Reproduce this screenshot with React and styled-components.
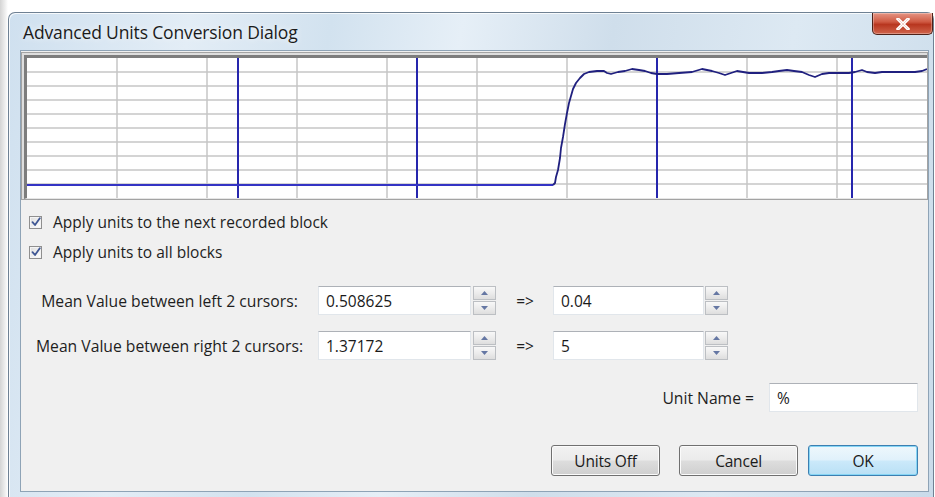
import React from "react";
import styled, { createGlobalStyle } from "styled-components";

const Global = createGlobalStyle`
  html, body { margin: 0; padding: 0; background: #ffffff; overflow: hidden; }
  body { font-family: "Open Sans", "Liberation Sans", sans-serif; }
  #root { width: 935px; height: 497px; position: relative; overflow: hidden; }
`;

const Desktop = styled.div`
  width: 935px;
  height: 497px;
  padding: 12px 0 0 8px;
  box-sizing: border-box;
  background: linear-gradient(90deg, #d4d4d4 0px, #eeeeee 5px, #ffffff 8px);
`;

const Window = styled.div`
  width: 926px;
  height: 500px;
  box-sizing: border-box;
  border: 1px solid #6f8193;
  border-bottom: none;
  border-radius: 7px 7px 0 0;
  background: linear-gradient(
    100deg,
    #cfe0ef 0%,
    #e3edf6 18%,
    #d2e2ef 32%,
    #e6eff7 45%,
    #cfdeeb 60%,
    #dde9f3 78%,
    #c9dbea 100%
  );
  box-shadow: inset 1px 1px 0 rgba(255, 255, 255, 0.8);
  padding: 0 0 0 11px;
  display: flex;
  flex-direction: column;
`;

const TitleBar = styled.div`
  height: 37px;
  display: flex;
  justify-content: space-between;
  align-items: flex-start;
`;

const Title = styled.div`
  font-family: "Open Sans", "Liberation Sans", sans-serif;
  font-size: 17.5px;
  color: #1b1b1b;
  padding: 7px 0 0 3px;
  letter-spacing: -0.15px;
  text-shadow: 0 0 6px rgba(255, 255, 255, 0.9);
`;

const CloseButton = styled.div`
  width: 61px;
  height: 22px;
  margin-right: 0px;
  box-sizing: border-box;
  border: 1px solid #4e2219;
  border-top: none;
  border-radius: 0 0 5px 5px;
  background: linear-gradient(180deg, #e59584 0%, #cf5a43 42%, #b8361f 55%, #d0654c 100%);
  display: flex;
  align-items: center;
  justify-content: center;
  box-shadow: inset 0 0 0 1px rgba(255, 255, 255, 0.3);
`;

const Client = styled.div`
  width: 909px;
  height: 442px;
  box-sizing: border-box;
  border: 1px solid #8ea3b6;
  background: #f0f0f0;
  display: flex;
  flex-direction: column;
`;

const ChartFrame = styled.div`
  margin-top: 1px;
  width: 907px;
  box-sizing: border-box;
  border: 1px solid #a3a3a3;
  background: #dedede;
  padding: 2px 0 0 2px;
`;

const ChartWell = styled.div`
  border-top: 3px solid #7d7d7d;
  border-left: 3px solid #7d7d7d;
  border-bottom: 1px solid #e6e6e6;
  background: #ffffff;
  width: 900px;
  height: 140px;
  svg { display: block; }
`;

const Checks = styled.div`
  margin-top: 7px;
  padding-left: 8px;
  display: flex;
  flex-direction: column;
`;

const CheckRow = styled.label`
  height: 30px;
  display: flex;
  align-items: center;
  gap: 11px;
  font-size: 15.5px;
  color: #1e1e1e;
`;

const Box = styled.span`
  width: 13px;
  height: 13px;
  box-sizing: border-box;
  border: 1px solid #8f8f8f;
  background: linear-gradient(135deg, #dcdcdc 0%, #f6f6f6 70%, #ffffff 100%);
  box-shadow: inset 0 0 0 1px #f4f4f4;
  display: flex;
  align-items: center;
  justify-content: center;
`;

const FormGrid = styled.div`
  margin-top: 19px;
  display: grid;
  grid-template-columns: 297px 153px 2px 23px 57px 151px 1px 23px;
  grid-template-rows: 29px 29px;
  row-gap: 16px;
  align-items: center;
`;

const FieldLabel = styled.div`
  grid-column: 1;
  text-align: center;
  font-size: 15.7px;
  color: #1e1e1e;
`;

const TextBox = styled.div`
  grid-column: ${(p) => p.$col};
  height: 29px;
  box-sizing: border-box;
  border: 1px solid #e1e6eb;
  border-top-color: #adb1b7;
  background: #ffffff;
  padding-left: 7px;
  display: flex;
  align-items: center;
  font-size: 15.5px;
  color: #1a1a1a;
  width: ${(p) => p.$w || "auto"};
`;

const Arrow = styled.div`
  grid-column: 5;
  text-align: center;
  font-size: 15.5px;
  color: #1e1e1e;
  padding-left: 1px;
`;

const Spin = styled.div`
  grid-column: ${(p) => p.$col};
  height: 29px;
  display: flex;
  flex-direction: column;
  gap: 1px;
`;

const SpinHalf = styled.div`
  flex: 1;
  box-sizing: border-box;
  border: 1px solid #bcbfc3;
  background: linear-gradient(180deg, #f8f8f8 0%, #ececec 50%, #dedede 100%);
  display: flex;
  align-items: center;
  justify-content: center;
`;

const UnitRow = styled.div`
  margin-top: 23px;
  display: flex;
  justify-content: flex-end;
  align-items: center;
  padding-right: 10px;
`;

const UnitLabel = styled.div`
  font-size: 15.7px;
  color: #1e1e1e;
  margin-right: 15px;
`;

const ButtonRow = styled.div`
  margin-top: 33px;
  display: flex;
  justify-content: flex-end;
  padding-right: 10px;
`;

const Button = styled.div`
  width: ${(p) => p.$w}px;
  margin-left: ${(p) => p.$gap}px;
  height: 31px;
  box-sizing: border-box;
  border: 1px solid ${(p) => (p.$default ? "#3c7fb1" : "#707070")};
  border-radius: 3px;
  background: ${(p) =>
    p.$default
      ? "linear-gradient(180deg, #eef7fc 0%, #e0f1fb 48%, #cbe9fa 52%, #b9e0f5 100%)"
      : "linear-gradient(180deg, #f2f2f2 0%, #ebebeb 48%, #dddddd 52%, #cfcfcf 100%)"};
  box-shadow: inset 0 0 0 1px ${(p) => (p.$default ? "#86d5f5" : "#fbfbfb")};
  display: flex;
  align-items: center;
  justify-content: center;
  font-size: 15.5px;
  color: #1a1a1a;
  letter-spacing: -0.2px;
`;

const Check = () => (
  <svg width="10" height="10" viewBox="0 0 10 10">
    <path d="M1.5 5.2 L4 8 L8.8 1.2" fill="none" stroke="#3f5794" strokeWidth="1.8" strokeLinecap="round" strokeLinejoin="round" />
  </svg>
);

const Tri = ({ up }) => (
  <svg width="7" height="4" viewBox="0 0 7 4">
    <path d={up ? "M0 4 L3.5 0 L7 4 Z" : "M0 0 L3.5 4 L7 0 Z"} fill="#6577a3" />
  </svg>
);

const Spinner = ({ col }) => (
  <Spin $col={col}>
    <SpinHalf><Tri up /></SpinHalf>
    <SpinHalf><Tri /></SpinHalf>
  </Spin>
);

// recorded trace, in chart coordinates (900 x 140)
const trace = [
  [0, 127], [526, 127], [528, 125], [529, 119], [531, 112], [533, 100], [534, 90],
  [536, 79], [538, 66], [540, 55], [542, 45], [544, 38], [546, 31], [549, 25],
  [553, 20], [557, 16], [562, 14], [570, 13], [577, 13], [580, 15], [584, 16],
  [591, 14], [598, 13], [605, 11], [612, 12], [618, 13], [624, 15], [630, 16],
  [640, 16], [652, 15], [665, 14], [675, 11], [685, 13], [692, 15], [698, 17],
  [704, 15], [710, 13], [716, 14], [722, 15], [735, 15], [745, 14], [752, 13],
  [760, 12], [767, 13], [775, 14], [782, 17], [788, 19], [795, 16], [802, 15],
  [812, 15], [822, 15], [828, 14], [835, 12], [840, 14], [848, 15], [855, 14],
  [865, 14], [878, 14], [888, 14], [895, 13], [900, 11],
];

const gridX = [90, 180, 270, 360, 450, 540, 630, 720, 810];
const gridY = [14, 28, 42, 56, 70, 84, 98, 112, 126];
const cursors = [211, 390, 630, 825];

const Chart = () => (
  <svg width="900" height="140" viewBox="0 0 900 140">
    {gridY.map((y) => (
      <line key={"h" + y} x1="0" x2="900" y1={y} y2={y} stroke="#c6c6c6" strokeWidth="1.5" />
    ))}
    {gridX.map((x) => (
      <line key={"v" + x} x1={x} x2={x} y1="0" y2="140" stroke="#c6c6c6" strokeWidth="1.5" />
    ))}
    {cursors.map((x) => (
      <line key={"c" + x} x1={x} x2={x} y1="0" y2="140" stroke="#2626ad" strokeWidth="2" />
    ))}
    <polyline
      points={trace.slice(0, 2).map((p) => p.join(",")).join(" ")}
      fill="none"
      stroke="#3434c4"
      strokeWidth="1.8"
    />
    <polyline
      points={trace.slice(1).map((p) => p.join(",")).join(" ")}
      fill="none"
      stroke="#20207f"
      strokeWidth="1.8"
      strokeLinejoin="round"
    />
  </svg>
);

export default function App() {
  return (
    <>
      <Global />
      <Desktop>
        <Window>
          <TitleBar>
            <Title>Advanced Units Conversion Dialog</Title>
            <CloseButton>
              <svg width="14" height="12" viewBox="0 0 14 12">
                <path d="M2 1 L12 11 M12 1 L2 11" stroke="#ffffff" strokeWidth="3.2" strokeLinecap="square" />
                <path d="M2 1 L12 11 M12 1 L2 11" stroke="#f0d2ca" strokeWidth="1" />
              </svg>
            </CloseButton>
          </TitleBar>
          <Client>
            <ChartFrame>
              <ChartWell>
                <Chart />
              </ChartWell>
            </ChartFrame>
            <Checks>
              <CheckRow>
                <Box><Check /></Box>
                Apply units to the next recorded block
              </CheckRow>
              <CheckRow>
                <Box><Check /></Box>
                Apply units to all blocks
              </CheckRow>
            </Checks>
            <FormGrid>
              <FieldLabel>Mean Value between left 2 cursors:</FieldLabel>
              <TextBox $col={2}>0.508625</TextBox>
              <Spinner col={4} />
              <Arrow>=&gt;</Arrow>
              <TextBox $col={6}>0.04</TextBox>
              <Spinner col={8} />

              <FieldLabel>Mean Value between right 2 cursors:</FieldLabel>
              <TextBox $col={2}>1.37172</TextBox>
              <Spinner col={4} />
              <Arrow>=&gt;</Arrow>
              <TextBox $col={6}>5</TextBox>
              <Spinner col={8} />
            </FormGrid>
            <UnitRow>
              <UnitLabel>Unit Name =</UnitLabel>
              <TextBox $w="149px">%</TextBox>
            </UnitRow>
            <ButtonRow>
              <Button $w={109} $gap={0}>Units Off</Button>
              <Button $w={119} $gap={19}>Cancel</Button>
              <Button $w={110} $gap={10} $default>OK</Button>
            </ButtonRow>
          </Client>
        </Window>
      </Desktop>
    </>
  );
}
